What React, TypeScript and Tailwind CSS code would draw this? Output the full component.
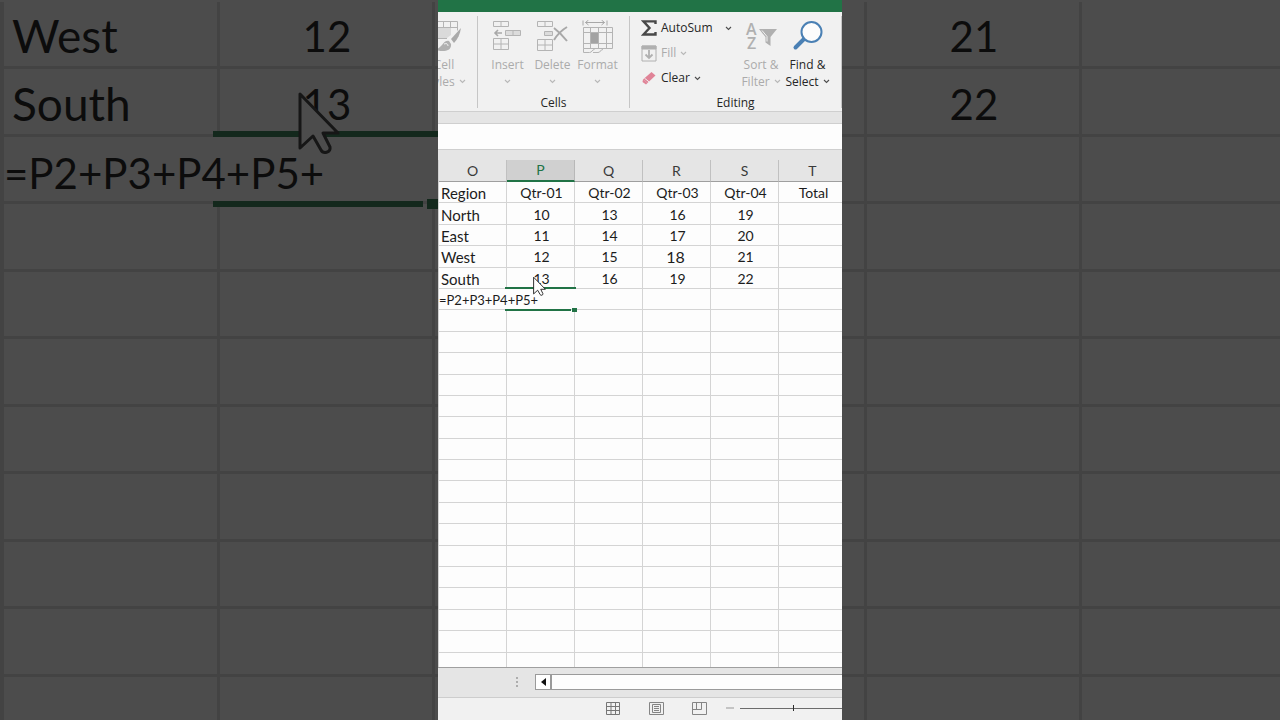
import type { ReactNode } from 'react';

const columns = ['O', 'P', 'Q', 'R', 'S', 'T'];

const sheet: string[][] = [
  ['Region', 'Qtr-01', 'Qtr-02', 'Qtr-03', 'Qtr-04', 'Total'],
  ['North', '10', '13', '16', '19', ''],
  ['East', '11', '14', '17', '20', ''],
  ['West', '12', '15', '18', '21', ''],
  ['South', '13', '16', '19', '22', ''],
];

// Columns Q and R sit behind the main window, so they stay empty here
const backdropRows: string[][] = [
  ['West', '12', '', '', '21', ''],
  ['South', '13', '', '', '22', ''],
];

const formula = '=P2+P3+P4+P5+';
const emptyRows = Array.from({ length: 17 });
const backdropEmptyRows = Array.from({ length: 8 });

function Chevron({ className = '' }: { className?: string }) {
  return (
    <svg viewBox="0 0 7 5" className={`inline-block h-[5px] w-[7px] shrink-0 opacity-80 ${className}`} fill="none" stroke="currentColor" strokeWidth="1.1">
      <path d="M1 1l2.5 2.5L6 1" />
    </svg>
  );
}

function Pointer({ className }: { className: string }) {
  return (
    <svg viewBox="0 0 42 66" className={className} strokeWidth="3" strokeLinejoin="round">
      <path d="M2 3v54l13-12 8 14c2 4 10 3 9-3l-7-14h15z" />
    </svg>
  );
}

function CellStylesIcon() {
  return (
    <svg viewBox="0 0 26 32" className="ml-2.5 h-8 w-[26px] shrink-0" fill="none" stroke="#b4b4b4">
      <path d="M0 1.5h21.500v9M0 7.500h21M0 18.500h11M7.500 1.500v6M14.500 1.500v6" />
      <path d="M0 8h15v7l-4 3H0z" fill="#dadada" stroke="none" />
      <path d="M25 8l-10 11 3 4c4-4 6-9 7-15z" fill="#aaa" stroke="none" />
      <path d="M13 21c-5-1-6 4-9 6l-4 3c6 2 16 2 15-6z" fill="#b0b0b0" stroke="none" />
      <path d="M8 24c3-1 4 0 4 2" stroke="#f1f1f1" />
    </svg>
  );
}

function InsertIcon() {
  return (
    <svg viewBox="0 0 29 32" className="h-8 w-[29px]" fill="none" stroke="#b4b4b4">
      <path d="M.5 1.500h15v5H.5zM8 1.500v5M.5 18.500h15v11H.5zM8 18.500v11M.5 24h15" />
      <path d="M12.500 10.500h15v5h-15zM20 10.500v5" fill="#dcdcdc" />
      <path d="M9 13H2M5 10l-3 3 3 3" strokeWidth="1.600" stroke="#a8a8a8" />
    </svg>
  );
}

function DeleteIcon() {
  return (
    <svg viewBox="0 0 32 32" className="size-8" fill="none" stroke="#b4b4b4">
      <path d="M.5 1.500h15v5H.5zM8 1.500v5M.5 19.500h15v11H.5zM8 19.500v11M.5 25h15" />
      <path d="M7.500 11.500h8v4h-8z" fill="#dcdcdc" />
      <path d="M17 8c4 3 9 8 13 13M30 7c-5 3-10 8-13 13" strokeWidth="2" stroke="#a8a8a8" />
    </svg>
  );
}

function FormatIcon() {
  return (
    <svg viewBox="0 0 31 34" className="h-[34px] w-[31px]" fill="none" stroke="#b4b4b4">
      <path d="M1 .5v5M25 .5v5M3.500 2.500h19M6.500 0l-3 2.500 3 2.500M19.500 0l3 2.500-3 2.500" stroke="#a8a8a8" />
      <path d="M1.500 7.500h29v21h-29zM8.500 7.500v21M16.500 7.500v21M24.500 7.500v21M1.500 12.500h29M1.500 23.500h29" />
      <path d="M9 13h7v10H9z" fill="#a2a2a2" stroke="none" />
      <path d="M1.500 28.500v4h6c3 0 2-3 5-3M11 32.500h5c3 0 2-3 5-3" />
    </svg>
  );
}

function SortFilterIcon() {
  return (
    <svg viewBox="0 0 32 32" className="size-8 overflow-visible" fill="#b0b0b0">
      <text x="1" y="15" fontSize="16" fontFamily="Open Sans, sans-serif" fontWeight="600">A</text>
      <text x="2" y="29" fontSize="16" fontFamily="Open Sans, sans-serif" fontWeight="600">Z</text>
      <path d="M14 9h18l-6.500 8v9l-5-3.500V17z" />
      <path d="M17 10.500l5 6v5" stroke="#f1f1f1" fill="none" />
    </svg>
  );
}

function FindIcon() {
  return (
    <svg viewBox="0 0 31 31" className="size-[31px]" fill="none" stroke="#4a80b4">
      <path d="M12 19L3.500 27.500" strokeWidth="4" strokeLinecap="round" />
      <circle cx="19.500" cy="12" r="10" strokeWidth="2" fill="#fcfcfc" />
    </svg>
  );
}

interface LargeButtonProps {
  icon: ReactNode;
  label: string;
  second?: string;
  disabled?: boolean;
  className: string;
}

function LargeButton({ icon, label, second, disabled, className }: LargeButtonProps) {
  return (
    <button
      disabled={disabled}
      className={`flex shrink-0 flex-col items-center pt-0.5 text-xs leading-[17px] whitespace-nowrap ${disabled ? 'text-[#ababab]' : 'text-[#262626]'} ${className}`}
    >
      <span className="flex h-[38px] items-start justify-center pt-0.5">{icon}</span>
      <span>{label}</span>
      <span className="flex h-[17px] items-center gap-1">
        {second}
        <Chevron />
      </span>
    </button>
  );
}

function Ribbon() {
  return (
    <div className="flex h-[99px] shrink-0 overflow-hidden bg-[#f1f1f1] pt-1 font-['Open_Sans',sans-serif] text-xs">
      <section className="flex w-[39px] shrink-0 justify-end pr-3.5">
        <LargeButton icon={<CellStylesIcon />} label="Cell" second="Styles" disabled className="w-[38px]" />
      </section>

      <section className="flex h-[92px] w-[152px] shrink-0 flex-col border-l border-[#c6c6c6]">
        <div className="flex flex-1 pl-[7px]">
          <LargeButton icon={<InsertIcon />} label="Insert" disabled className="w-[45px]" />
          <LargeButton icon={<DeleteIcon />} label="Delete" disabled className="w-[45px]" />
          <LargeButton icon={<FormatIcon />} label="Format" disabled className="w-[45px]" />
        </div>
        <h2 className="text-center leading-[10px] text-[#262626]">Cells</h2>
      </section>

      <section className="flex h-[92px] flex-1 flex-col border-x border-[#c6c6c6]">
        <div className="flex flex-1">
          <div className="flex w-[108px] shrink-0 flex-col gap-px pl-[11px] text-[#262626]">
            <button className="flex h-6 items-center">
              <svg viewBox="0 0 16 16" className="mr-1 size-4 shrink-0" fill="none" stroke="#484848" strokeWidth="2.4">
                <path d="M14.500 4V1.400H2.500L8.500 8l-6 6.500h12V12" />
              </svg>
              <span>AutoSum</span>
              <Chevron className="ml-3" />
            </button>
            <button disabled className="flex h-6 items-center text-[#ababab]">
              <svg viewBox="0 0 16 17" className="mr-1 h-[17px] w-4 shrink-0" fill="none" stroke="#b0b0b0">
                <path d="M1 1h14v15H1z" />
                <path d="M1 1h14v3H1z" fill="#b0b0b0" />
                <path d="M8 5v8M4.500 9.500L8 13l3.500-3.500" strokeWidth="1.800" />
              </svg>
              <span>Fill</span>
              <Chevron className="ml-1" />
            </button>
            <button className="flex h-6 items-center">
              <svg viewBox="0 0 16 16" className="mr-1 size-4 shrink-0">
                <path d="M2 9.500L10.500 2l4 3.500-8 7.500z" fill="#e08397" />
                <path d="M2 9.500l4.500 3.500-1.500 1.500L1.500 12z" fill="#e08397" />
                <path d="M3.500 8.200l4.500 3.600" stroke="#f1f1f1" />
              </svg>
              <span>Clear</span>
              <Chevron className="ml-1" />
            </button>
          </div>
          <LargeButton icon={<SortFilterIcon />} label="Sort &" second="Filter" disabled className="w-[46px]" />
          <LargeButton icon={<FindIcon />} label="Find &" second="Select" className="w-[47px]" />
        </div>
        <h2 className="text-center leading-[10px] text-[#262626]">Editing</h2>
      </section>
    </div>
  );
}

function Grid() {
  return (
    <div className="min-h-0 flex-1 overflow-hidden">
      <table className="h-[514px] w-[409px] table-fixed border-separate border-spacing-0 border-l border-[#d0d0d0] font-[Lato,sans-serif] text-sm leading-[18px] text-[#1c1c1c]">
        <thead>
          <tr className="h-[22px]">
            {columns.map((column) => (
              <th
                key={column}
                scope="col"
                className={`p-0 font-normal ${
                  column === 'P'
                    ? 'border-r border-b-2 border-r-[#b8b8b8] border-b-[#217346] bg-[#d0d0d0] text-[#217346]'
                    : 'border-r border-b border-r-[#c0c0c0] border-b-[#9f9f9f] bg-[#e5e5e5] text-[#3a3a3a]'
                }`}
              >
                {column}
              </th>
            ))}
          </tr>
        </thead>
        <tbody>
          {sheet.map((row) => (
            <tr key={row[0]} className="h-[21px]">
              {row.map((value, index) => (
                <td
                  key={columns[index]}
                  className={`border-r border-b border-[#d4d4d4] p-0 pt-0.5 ${
                    index === 0 ? 'pl-0.5 text-[15px]' : value === '18' ? 'pr-0.5 text-center text-base leading-[18px]' : 'pl-0.5 text-center'
                  }`}
                >
                  {value === '13' && index === 1 ? (
                    <div className="relative">
                      {value}
                      <Pointer className="absolute top-1.5 left-6 z-10 h-[21px] w-[13px] fill-white stroke-[#222]" />
                    </div>
                  ) : (
                    value
                  )}
                </td>
              ))}
            </tr>
          ))}
          <tr className="h-[21px]">
            <td colSpan={2} className="relative border-b border-[#d4d4d4] p-0 pt-0.5">
              <input
                aria-label="Cell P6"
                defaultValue={formula}
                className="block h-[18px] w-full bg-transparent text-[13px] outline-none"
              />
              <span className="absolute -top-0.5 -right-px h-0.5 w-[71px] bg-[#217346]" />
              <span className="absolute right-1 -bottom-0.5 h-0.5 w-[66px] bg-[#217346]" />
              <span className="absolute -right-0.5 -bottom-[3px] h-1 w-[5px] bg-[#217346]" />
            </td>
            {columns.slice(2).map((column) => (
              <td key={column} className="border-r border-b border-[#d4d4d4] p-0" />
            ))}
          </tr>
          {emptyRows.map((_, row) => (
            <tr key={row} className="h-[21px]">
              {columns.map((column) => (
                <td key={column} className="border-r border-b border-[#d4d4d4] p-0" />
              ))}
            </tr>
          ))}
        </tbody>
      </table>
    </div>
  );
}

function BottomBar() {
  return (
    <footer className="shrink-0">
      <div className="flex h-[31px] items-center border-y border-t-[#9f9f9f] border-b-[#cdcdcd] bg-[#e5e5e5] pb-px pl-[78px]">
        <span className="flex flex-col gap-0.5">
          <span className="size-0.5 bg-[#adadad]" />
          <span className="size-0.5 bg-[#adadad]" />
          <span className="size-0.5 bg-[#adadad]" />
        </span>
        <button aria-label="Scroll left" className="ml-[17px] flex h-4 w-4 shrink-0 items-center justify-center border border-[#9a9a9a] bg-white">
          <svg viewBox="0 0 5 8" className="h-2 w-[5px]" fill="#111">
            <path d="M5 0v8L0 4z" />
          </svg>
        </button>
        <div className="h-4 flex-1 border-y border-l border-[#9a9a9a] bg-[#fdfdfd]" />
      </div>
      <div className="flex h-[22px] items-center bg-[#f1f1f1] pb-0.5 pl-[168px]">
        <button aria-label="Normal view" className="shrink-0">
          <svg viewBox="0 0 15 15" className="size-[15px]" fill="none" stroke="#767676">
            <path d="M.5 1.500h13v12H.5zM.5 5.500h13M.5 9.500h13M5 1.500v12M9.500 1.500v12" />
          </svg>
        </button>
        <button aria-label="Page layout view" className="ml-7 shrink-0">
          <svg viewBox="0 0 15 15" className="size-[15px]" fill="none" stroke="#858585">
            <path d="M.5 1.500h14v12H.5z" />
            <path d="M3.500 3.500h8v8h-8zM5 5.500h5M5 7.500h5M5 9.500h5" />
          </svg>
        </button>
        <button aria-label="Page break preview" className="ml-7 shrink-0">
          <svg viewBox="0 0 15 15" className="size-[15px]" fill="none" stroke="#858585">
            <path d="M.5 1.500h14v12H.5zM.5 8.500h9v-7M4.500 1.500v7" />
          </svg>
        </button>
        <button aria-label="Zoom out" className="ml-[19px] h-0.5 w-2 shrink-0 bg-[#c4c4c4]" />
        <div className="ml-1.5 flex h-1.5 flex-1 items-center justify-center bg-[linear-gradient(#6c6c6c,#6c6c6c)] bg-[length:100%_1px] bg-center bg-no-repeat pl-1">
          <span className="h-1.5 w-px bg-[#2c2c2c]" />
        </div>
      </div>
    </footer>
  );
}

function Backdrop() {
  return (
    <div aria-hidden="true" className="col-start-1 row-start-1 overflow-hidden bg-[#4c4c4c] pt-0.5">
      <table className="h-[742px] w-[1298px] table-fixed border-separate border-spacing-0 border-l-4 border-[#434343] font-[Lato,sans-serif] text-[42px] leading-none text-[#0c0c0c]">
        <tbody>
          {backdropRows.map((row) => (
            <tr key={row[0]} className="h-[67px]">
              {row.map((value, index) => (
                <td
                  key={index}
                  className={`border-r-3 border-b-3 border-[#434343] p-0 pt-1 ${index === 0 ? 'pl-2 text-[46px]' : 'pl-0.5 text-center'}`}
                >
                  {value === '13' ? (
                    <div className="relative">
                      {value}
                      <Pointer className="absolute top-2 left-[76px] z-10 h-[66px] w-[42px] fill-[#4c4c4c] stroke-[#161616]" />
                    </div>
                  ) : (
                    value
                  )}
                </td>
              ))}
            </tr>
          ))}
          <tr className="h-[67px]">
            <td colSpan={2} className="relative border-b-3 border-[#434343] p-0 pt-2">
              {formula}
              <span className="absolute -top-1.5 -right-1 h-1.5 w-[226px] bg-[#13281c]" />
              <span className="absolute right-3 -bottom-1.5 h-1.5 w-[210px] bg-[#13281c]" />
              <span className="absolute -right-2 -bottom-2 h-2.5 w-4 bg-[#13281c]" />
            </td>
            {columns.slice(2).map((column) => (
              <td key={column} className="border-r-3 border-b-3 border-[#434343] p-0" />
            ))}
          </tr>
          {backdropEmptyRows.map((_, row) => (
            <tr key={row} className="h-[67px]">
              {columns.map((column) => (
                <td key={column} className="border-r-3 border-b-3 border-[#434343] p-0" />
              ))}
            </tr>
          ))}
        </tbody>
      </table>
    </div>
  );
}

export default function App() {
  return (
    <div className="grid h-screen grid-cols-[minmax(0,1fr)] grid-rows-[minmax(0,1fr)] overflow-hidden">
      <Backdrop />
      <main className="z-20 col-start-1 row-start-1 mx-auto flex w-full max-w-[404px] flex-col overflow-hidden bg-[#fdfdfd]">
        <div className="h-3 shrink-0 bg-[#217346]" />
        <Ribbon />
        <div className="shrink-0 border-t border-[#cfcfcf] bg-[#e5e5e5] pt-[11px]">
          <input
            aria-label="Formula bar"
            className="block h-[27px] w-full border-y border-[#cfcfcf] bg-[#fdfdfd] px-2 font-[Lato,sans-serif] text-sm outline-none"
          />
          <div className="h-2.5" />
        </div>
        <Grid />
        <BottomBar />
      </main>
    </div>
  );
}
